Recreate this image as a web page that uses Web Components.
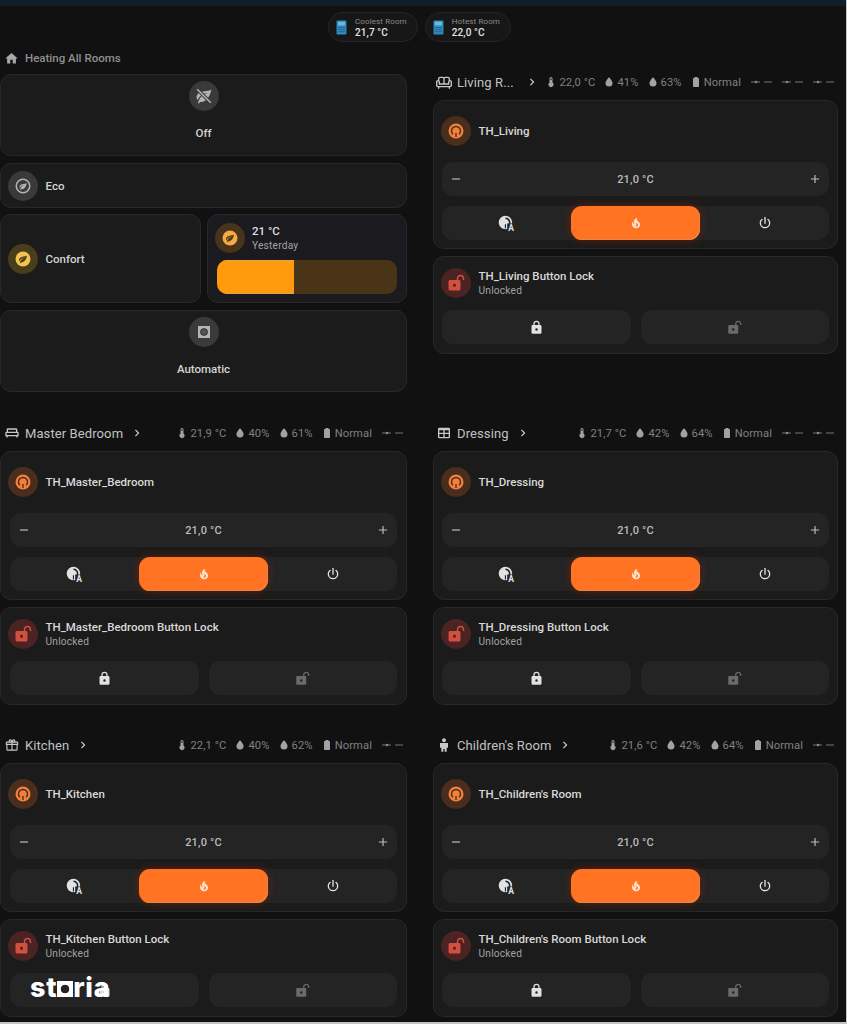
<!DOCTYPE html>
<html>
<head>
<meta charset="utf-8">
<title>Heating</title>
<style>
    html { background: #c4c4c4; }
    body {
        margin: 0;
        width: 846px;
        height: 1022px;
        overflow: hidden;
        position: relative;
        background: #111111;
        color: #e1e1e1;
        font-family: Roboto, "Liberation Sans", sans-serif;
    }
</style>
</head>
<body>
<top-bar></top-bar>
<chip-row>
    <top-chip label="Coolest Room" value="21,7 °C"></top-chip>
    <top-chip label="Hotest Room" value="22,0 °C"></top-chip>
</chip-row>

<room-grid>
    <heat-section>
        <mode-tile layout="column" icon="leafOff" label="Off" tone="gray"></mode-tile>
        <mode-tile layout="row" icon="leafRing" label="Eco" tone="gray"></mode-tile>
        <split-row>
            <mode-tile layout="row" icon="leafDisc" label="Confort" tone="yellow" tall></mode-tile>
            <slider-tile value="21 °C" sub="Yesterday"></slider-tile>
        </split-row>
        <mode-tile layout="column" icon="auto" label="Automatic" tone="gray"></mode-tile>
    </heat-section>

    <room-section class="first" icon="sofa" name="Living R..." name-width="61" temp="22,0 °C" hum="41%" soil="63%" dashes="3">
        <thermostat-card name="TH_Living"></thermostat-card>
        <lock-card name="TH_Living Button Lock"></lock-card>
    </room-section>

    <room-section class="left" icon="bed" name="Master Bedroom" temp="21,9 °C" hum="40%" soil="61%" dashes="1">
        <thermostat-card name="TH_Master_Bedroom"></thermostat-card>
        <lock-card name="TH_Master_Bedroom Button Lock"></lock-card>
    </room-section>

    <room-section icon="table" name="Dressing" temp="21,7 °C" hum="42%" soil="64%" dashes="2">
        <thermostat-card name="TH_Dressing"></thermostat-card>
        <lock-card name="TH_Dressing Button Lock"></lock-card>
    </room-section>

    <room-section class="left" icon="gift" name="Kitchen" temp="22,1 °C" hum="40%" soil="62%" dashes="1">
        <thermostat-card name="TH_Kitchen"></thermostat-card>
        <lock-card name="TH_Kitchen Button Lock"></lock-card>
    </room-section>

    <room-section icon="child" name="Children's Room" temp="21,6 °C" hum="42%" soil="64%" dashes="1">
        <thermostat-card name="TH_Children's Room"></thermostat-card>
        <lock-card name="TH_Children's Room Button Lock"></lock-card>
    </room-section>
</room-grid>

<storia-mark></storia-mark>

<script>
const p = (d) => `<path fill="currentColor" d="${d}"/>`;

const LEAF = "M17,8C8,10 5.9,16.17 3.82,21.34L5.71,22L6.66,19.7C7.14,19.87 7.64,20 8,20C19,20 22,3 22,3C21,5 14,5.25 9,6.25C4,7.25 2,11.5 2,13.5C2,15.5 3.75,17.25 3.75,17.25C7,8 17,8 17,8Z";
const LOCK = "M12,17A2,2 0 0,0 14,15C14,13.89 13.1,13 12,13A2,2 0 0,0 10,15A2,2 0 0,0 12,17M18,8A2,2 0 0,1 20,10V20A2,2 0 0,1 18,22H6A2,2 0 0,1 4,20V10C4,8.89 4.9,8 6,8H7V6A5,5 0 0,1 12,1A5,5 0 0,1 17,6V8H18M12,3A3,3 0 0,0 9,6V8H15V6A3,3 0 0,0 12,3Z";
const LOCK_OPEN = "M18,1C15.24,1 13,3.24 13,6V8H4C2.9,8 2,8.89 2,10V20C2,21.11 2.9,22 4,22H16C17.11,22 18,21.11 18,20V10C18,8.89 17.11,8 16,8H15V6C15,4.34 16.34,3 18,3C19.66,3 21,4.34 21,6V8H23V6C23,3.24 20.76,1 18,1M10,13C11.1,13 12,13.89 12,15C12,16.11 11.1,17 10,17C8.9,17 8,16.11 8,15C8,13.89 8.9,13 10,13Z";
const GIFT = "M22,12V20A2,2 0 0,1 20,22H4A2,2 0 0,1 2,20V12A1,1 0 0,1 1,11V8A2,2 0 0,1 3,6H6.17C6.06,5.69 6,5.35 6,5A3,3 0 0,1 9,2C10,2 10.88,2.5 11.43,3.24V3.23L12,4L12.57,3.23V3.24C13.12,2.5 14,2 15,2A3,3 0 0,1 18,5C18,5.35 17.94,5.69 17.83,6H21A2,2 0 0,1 23,8V11A1,1 0 0,1 22,12M4,20H11V12H4V20M20,20V12H13V20H20M9,4A1,1 0 0,0 8,5A1,1 0 0,0 9,6A1,1 0 0,0 10,5A1,1 0 0,0 9,4M15,4A1,1 0 0,0 14,5A1,1 0 0,0 15,6A1,1 0 0,0 16,5A1,1 0 0,0 15,4M3,8V10H11V8H3M13,8V10H21V8H13Z";

const ICONS = {
    home: p("M10,20V14H14V20H19V12H22L12,3L2,12H5V20H10Z"),
    sofa: p("M21 9V7C21 5.35 19.65 4 18 4H14C13.23 4 12.53 4.3 12 4.78C11.47 4.3 10.77 4 10 4H6C4.35 4 3 5.35 3 7V9C1.35 9 0 10.35 0 12V17C0 18.65 1.35 20 3 20V22H5V20H19V22H21V20C22.65 20 24 18.65 24 17V12C24 10.35 22.65 9 21 9M14 6H18C18.55 6 19 6.45 19 7V9.78C18.39 10.33 18 11.12 18 12V14H13V7C13 6.45 13.45 6 14 6M5 7C5 6.45 5.45 6 6 6H10C10.55 6 11 6.45 11 7V14H6V12C6 11.12 5.61 10.33 5 9.78V7M22 17C22 17.55 21.55 18 21 18H3C2.45 18 2 17.55 2 17V12C2 11.45 2.45 11 3 11S4 11.45 4 12V16H20V12C20 11.45 20.45 11 21 11S22 11.45 22 12V17Z"),
    bed: p("M20,10V7A2,2 0 0,0 18,5H6A2,2 0 0,0 4,7V10A2,2 0 0,0 2,12V17H3.3L4,19H5L5.7,17H18.3L19,19H20L20.7,17H22V12A2,2 0 0,0 20,10M6,7H18V10H6V7M20,15H4V12H20V15Z"),
    table: p("M5,4H19A2,2 0 0,1 21,6V18A2,2 0 0,1 19,20H5A2,2 0 0,1 3,18V6A2,2 0 0,1 5,4M5,8V11.5H11V8H5M13,8V11.5H19V8H13M5,13.5V18H11V13.5H5M13,13.5V18H19V13.5H13Z"),
    gift: `<g transform="translate(1.8 1.8) scale(.85)">${p(GIFT)}</g>`,
    child: p("M12,2A3,3 0 0,1 15,5A3,3 0 0,1 12,8A3,3 0 0,1 9,5A3,3 0 0,1 12,2M11,22H8V16H6V9H18V16H16V22H13V18H11V22Z"),
    chevron: p("M8.59,16.58L13.17,12L8.59,7.41L10,6L16,12L10,18L8.59,16.58Z"),
    thermometer: p("M15 13V5A3 3 0 0 0 9 5V13A5 5 0 1 0 15 13M12 4A1 1 0 0 1 13 5V8H11V5A1 1 0 0 1 12 4Z"),
    drop: p("M12,21A7,7 0 0,1 5,14C5,9.5 12,2.5 12,2.5C12,2.5 19,9.5 19,14A7,7 0 0,1 12,21Z"),
    battery: p("M16.67,4H15V2H9V4H7.33A1.33,1.33 0 0,0 6,5.33V20.67C6,21.4 6.6,22 7.33,22H16.67A1.33,1.33 0 0,0 18,20.67V5.33C18,4.6 17.4,4 16.67,4Z"),
    minus: p("M19,13H5V11H19V13Z"),
    plus: p("M19,13H13V19H11V13H5V11H11V5H13V11H19V13Z"),
    fire: p("M17.66 11.2C17.43 10.9 17.15 10.64 16.89 10.38C16.22 9.78 15.46 9.35 14.82 8.72C13.33 7.26 13 4.85 13.95 3C13 3.23 12.17 3.75 11.46 4.32C8.87 6.4 7.85 10.07 9.07 13.22C9.11 13.32 9.15 13.42 9.15 13.55C9.15 13.77 9 13.97 8.8 14.05C8.57 14.15 8.33 14.09 8.14 13.93C8.08 13.88 8.04 13.83 8 13.76C6.87 12.33 6.69 10.28 7.45 8.64C5.78 10 4.87 12.3 5 14.47C5.06 14.97 5.12 15.47 5.29 15.97C5.43 16.57 5.7 17.17 6 17.7C7.08 19.43 8.95 20.67 10.96 20.92C13.1 21.19 15.39 20.8 17.03 19.32C18.86 17.66 19.5 15 18.56 12.72L18.43 12.46C18.22 12 17.66 11.2 17.66 11.2M14.5 17.5C14.22 17.74 13.76 18 13.4 18.1C12.28 18.5 11.16 17.94 10.5 17.28C11.69 17 12.4 16.12 12.61 15.23C12.78 14.43 12.46 13.77 12.33 13C12.21 12.26 12.23 11.63 12.5 10.94C12.69 11.32 12.89 11.7 13.13 12C13.9 13 15.11 13.44 15.37 14.8C15.41 14.94 15.43 15.08 15.43 15.23C15.46 16.05 15.1 16.95 14.5 17.5H14.5Z"),
    power: p("M16.56,5.44L15.11,6.89C16.84,7.94 18,9.83 18,12A6,6 0 0,1 12,18A6,6 0 0,1 6,12C6,9.83 7.16,7.94 8.88,6.88L7.44,5.44C5.36,6.88 4,9.28 4,12A8,8 0 0,0 12,20A8,8 0 0,0 20,12C20,9.28 18.64,6.88 16.56,5.44M13,3H11V13H13"),
    lock: p(LOCK),
    lockOpen: p(LOCK_OPEN),
    leafOff: p(LEAF) + `<path d="M3,3L21,21" stroke="#3a3a3a" stroke-width="4.4"/><path d="M3,3L21,21" stroke="currentColor" stroke-width="2"/>`,
    leafRing: `<circle cx="12" cy="12" r="9" fill="none" stroke="currentColor" stroke-width="2"/><g transform="translate(6.2 6.4) scale(.5)">${p(LEAF)}</g>`,
    leafDisc: `<circle cx="12" cy="12" r="10" fill="currentColor"/><g transform="translate(5.6 5.8) scale(.54)" style="color:#4a3a18">${p(LEAF)}</g>`,
    auto: `<rect x="4" y="4" width="16" height="16" fill="currentColor"/><circle cx="12" cy="12" r="4.4" fill="#555" stroke="#333" stroke-width="1.4"/>`,
    gauge: `<circle cx="12" cy="12" r="10" fill="currentColor"/><path d="M7.9,16.4A6,6 0 1,1 16.1,16.4" fill="none" stroke="#4a2d1c" stroke-width="1.9"/><path d="M12,14.5V20" stroke="#4a2d1c" stroke-width="1.8"/>`,
    gaugeAuto: `<circle cx="10.5" cy="10.5" r="9.5" fill="currentColor"/><path d="M10.5,4.6A6,6 0 0,1 15.8,13.4" fill="none" stroke="#242424" stroke-width="2.3"/><path d="M10.5,13V19" stroke="#242424" stroke-width="1.6"/><rect x="13" y="12" width="11" height="12" fill="#242424"/><text x="18.5" y="23" text-anchor="middle" font-family="Roboto, sans-serif" font-weight="700" font-size="12" fill="currentColor">A</text>`,
    meter: `<rect x="5" y="2" width="14" height="20" rx="2" fill="currentColor"/><rect x="7" y="4" width="10" height="5" fill="#6db6dc"/><path d="M7,12H17M7,15H17M7,18H17" stroke="#1a5f86" stroke-width="1.2"/>`
};

class MIcon extends HTMLElement {
    connectedCallback() {
        const size = this.getAttribute("size") || 16;
        this.attachShadow({ mode: "open" });
        this.shadowRoot.innerHTML = `
            <style>
                :host { display: inline-flex; width: ${size}px; height: ${size}px; flex: none; }
                svg { width: 100%; height: 100%; display: block; }
            </style>
            <svg viewBox="0 0 24 24">${ICONS[this.getAttribute("name")] || ""}</svg>
        `;
    }
}

class IconDisc extends HTMLElement {
    connectedCallback() {
        const tones = {
            gray: ["#3a3a3a", "#b4b4b4"],
            yellow: ["#4a3d1b", "#f3c34f"],
            amber: ["#48341a", "#f6a945"],
            orange: ["#4a2d1c", "#f0803c"],
            red: ["#4a2322", "#d2503f"]
        };
        const [bg, fg] = tones[this.getAttribute("tone") || "gray"];
        this.attachShadow({ mode: "open" });
        this.shadowRoot.innerHTML = `
            <style>
                :host {
                    display: flex;
                    width: 30px;
                    height: 30px;
                    flex: none;
                    border-radius: 50%;
                    align-items: center;
                    justify-content: center;
                    background: ${bg};
                    color: ${fg};
                }
            </style>
            <m-icon name="${this.getAttribute("icon")}" size="18"></m-icon>
        `;
    }
}

class TopBar extends HTMLElement {
    connectedCallback() {
        this.attachShadow({ mode: "open" });
        this.shadowRoot.innerHTML = `<style>:host { display: block; height: 6px; background: #0f1e29; }</style>`;
    }
}

class ChipRow extends HTMLElement {
    connectedCallback() {
        this.attachShadow({ mode: "open" });
        this.shadowRoot.innerHTML = `
            <style>
                :host {
                    display: flex;
                    justify-content: center;
                    gap: 7px;
                    height: 30px;
                    padding: 6px 7px 7px 0;
                }
            </style>
            <slot></slot>
        `;
    }
}

class TopChip extends HTMLElement {
    connectedCallback() {
        this.attachShadow({ mode: "open" });
        this.shadowRoot.innerHTML = `
            <style>
                :host {
                    display: flex;
                    align-items: center;
                    gap: 5px;
                    box-sizing: border-box;
                    height: 30px;
                    padding: 0 10px 0 4px;
                    border: 1px solid #262626;
                    border-radius: 15px;
                    background: #171717;
                    color: #2e8ec4;
                }
                .label { font-size: 8px; line-height: 10px; color: #8c8c8c; letter-spacing: .12px; }
                .value { font-size: 10px; line-height: 11px; font-weight: 500; color: #e4e4e4; letter-spacing: .1px; }
            </style>
            <m-icon name="meter" size="17"></m-icon>
            <div>
                <div class="label">${this.getAttribute("label")}</div>
                <div class="value">${this.getAttribute("value")}</div>
            </div>
        `;
    }
}

class RoomGrid extends HTMLElement {
    connectedCallback() {
        this.attachShadow({ mode: "open" });
        this.shadowRoot.innerHTML = `
            <style>
                :host {
                    display: grid;
                    grid-template-columns: 407px 405px;
                    column-gap: 26px;
                    row-gap: 31px;
                }
            </style>
            <slot></slot>
        `;
    }
}

class HeatSection extends HTMLElement {
    connectedCallback() {
        this.attachShadow({ mode: "open" });
        this.shadowRoot.innerHTML = `
            <style>
                :host { display: flex; flex-direction: column; margin-bottom: 1px; }
                .title {
                    display: flex;
                    align-items: center;
                    gap: 6px;
                    height: 18px;
                    padding-left: 4px;
                    margin-bottom: 7px;
                    font-size: 11.5px;
                    font-weight: 500;
                    color: #8f8f8f;
                }
                m-icon { color: #a8a8a8; }
                .stack { display: flex; flex-direction: column; gap: 7px; }
            </style>
            <div class="title"><m-icon name="home" size="15"></m-icon>Heating All Rooms</div>
            <div class="stack"><slot></slot></div>
        `;
    }
}

class SplitRow extends HTMLElement {
    connectedCallback() {
        this.attachShadow({ mode: "open" });
        this.shadowRoot.innerHTML = `
            <style>
                :host { display: grid; grid-template-columns: 1fr 1fr; gap: 6px; height: 89px; margin-top: -1px; }
            </style>
            <slot></slot>
        `;
    }
}

class ModeTile extends HTMLElement {
    connectedCallback() {
        const column = this.getAttribute("layout") === "column";
        this.attachShadow({ mode: "open" });
        this.shadowRoot.innerHTML = `
            <style>
                :host {
                    display: flex;
                    box-sizing: border-box;
                    align-items: center;
                    background: #1b1b1b;
                    border: 1px solid #282828;
                    border-radius: 11px;
                    font-size: 11.5px;
                    font-weight: 500;
                    color: #d4d4d4;
                    ${column
                        ? "flex-direction: column; height: 82px; padding-top: 6px; gap: 15px;"
                        : "height: 45px; padding-left: 7px; gap: 7.5px;"}
                }
                :host([tall]) { height: 89px; }
                span { line-height: 14px; }
            </style>
            <icon-disc icon="${this.getAttribute("icon")}" tone="${this.getAttribute("tone")}"></icon-disc>
            <span>${this.getAttribute("label")}</span>
        `;
    }
}

class SliderTile extends HTMLElement {
    connectedCallback() {
        this.attachShadow({ mode: "open" });
        this.shadowRoot.innerHTML = `
            <style>
                :host {
                    display: block;
                    box-sizing: border-box;
                    height: 89px;
                    padding: 8px 9px 0 7px;
                    background: #1b1b1f;
                    border: 1px solid #282828;
                    border-radius: 11px;
                }
                .head { display: flex; align-items: center; gap: 7.5px; margin-bottom: 7px; }
                .value { font-size: 11.5px; font-weight: 500; color: #dedede; line-height: 15px; }
                .sub { font-size: 10.2px; color: #a2a2a2; line-height: 14px; letter-spacing: .2px; }
                .track {
                    margin-left: 2px;
                    height: 34px;
                    border-radius: 10px;
                    background: #4a3417;
                    overflow: hidden;
                }
                .fill { width: 77px; height: 100%; background: #ff9a0d; box-shadow: inset 0 1px 0 #e9a24c, inset 0 -1px 0 #e9a24c; }
            </style>
            <div class="head">
                <icon-disc icon="leafDisc" tone="amber"></icon-disc>
                <div>
                    <div class="value">${this.getAttribute("value")}</div>
                    <div class="sub">${this.getAttribute("sub")}</div>
                </div>
            </div>
            <div class="track"><div class="fill"></div></div>
        `;
    }
}

class RoomSection extends HTMLElement {
    connectedCallback() {
        const nameWidth = this.getAttribute("name-width");
        const sensor = (icon, text) => `<span class="sensor"><m-icon name="${icon}" size="12"></m-icon>${text}</span>`;
        const dash = `<svg class="dash" width="21" height="6" viewBox="0 0 21 6"><path d="M0,3H9M13,3H21" stroke="#777" stroke-width="1"/><circle cx="5" cy="3" r="1.3" fill="#888"/></svg>`;
        this.attachShadow({ mode: "open" });
        this.shadowRoot.innerHTML = `
            <style>
                :host { display: flex; flex-direction: column; --bar-left: 1px; }
                :host(.first) { margin-top: 24px; }
                :host(.left) { --bar-left: 2px; }
                :host(.left) .head { padding-left: 4px; }
                .head {
                    display: flex;
                    align-items: center;
                    height: 18px;
                    padding: 0 4px 0 3px;
                    margin-bottom: 9px;
                    color: #bdbdbd;
                }
                .icon { margin-right: 5px; color: #c8c8c8; }
                .name { font-size: 13px; letter-spacing: .1px; white-space: nowrap; color: #c2c2c2; ${nameWidth ? `width: ${nameWidth}px;` : ""} }
                .chev { margin-left: 7px; color: #d0d0d0; }
                .sensors {
                    margin-left: auto;
                    display: flex;
                    align-items: center;
                    gap: 8px;
                    font-size: 11.2px;
                    color: #808080;
                    white-space: nowrap;
                }
                .sensor { display: inline-flex; align-items: center; letter-spacing: .1px; }
                .sensor m-icon { color: #a2a2a2; margin-right: 2px; }
                .dash { margin-left: 2px; }
                .stack { display: flex; flex-direction: column; gap: 7px; }
            </style>
            <div class="head">
                <m-icon class="icon" name="${this.getAttribute("icon")}" size="16"></m-icon>
                <span class="name">${this.getAttribute("name")}</span>
                <m-icon class="chev" name="chevron" size="14"></m-icon>
                <div class="sensors">
                    ${sensor("thermometer", this.getAttribute("temp"))}
                    ${sensor("drop", this.getAttribute("hum"))}
                    ${sensor("drop", this.getAttribute("soil"))}
                    ${sensor("battery", "Normal")}
                    ${dash.repeat(Number(this.getAttribute("dashes")))}
                </div>
            </div>
            <div class="stack"><slot></slot></div>
        `;
    }
}

class ThermostatCard extends HTMLElement {
    connectedCallback() {
        this.attachShadow({ mode: "open" });
        this.shadowRoot.innerHTML = `
            <style>
                :host {
                    display: block;
                    box-sizing: border-box;
                    height: 149px;
                    padding: 15px 0 0 7px;
                    background: #1b1b1b;
                    border: 1px solid #282828;
                    border-radius: 11px;
                }
                .head { display: flex; align-items: center; gap: 7.5px; margin-bottom: 16px; font-size: 11.5px; font-weight: 500; color: #d8d8d8; }
                .set, .modes { width: 387px; margin-left: var(--bar-left); height: 34px; border-radius: 11px; background: #242424; }
                .set {
                    display: flex;
                    align-items: center;
                    justify-content: space-between;
                    padding: 0 7px;
                    margin-bottom: 10px;
                    font-size: 11px;
                    font-weight: 500;
                    color: #bdbdbd;
                    letter-spacing: .2px;
                    box-sizing: border-box;
                }
                .modes {
                    display: grid;
                    grid-template-columns: 1fr 1fr 1fr;
                    color: #e2e2e2;
                }
                .modes > div { display: flex; align-items: center; justify-content: center; }
                .modes .on {
                    background: #ff7323;
                    border-radius: 11px;
                    color: #fbe3d0;
                    box-shadow: 0 0 8px rgba(130, 35, 0, .75), inset -1px -1px 0 #e5884f;
                }
            </style>
            <div class="head"><icon-disc icon="gauge" tone="orange"></icon-disc>${this.getAttribute("name")}</div>
            <div class="set">
                <m-icon name="minus" size="14"></m-icon>
                <span>21,0 °C</span>
                <m-icon name="plus" size="14"></m-icon>
            </div>
            <div class="modes">
                <div><m-icon name="gaugeAuto" size="17"></m-icon></div>
                <div class="on"><m-icon name="fire" size="14"></m-icon></div>
                <div><m-icon name="power" size="16"></m-icon></div>
            </div>
        `;
    }
}

class LockCard extends HTMLElement {
    connectedCallback() {
        this.attachShadow({ mode: "open" });
        this.shadowRoot.innerHTML = `
            <style>
                :host {
                    display: block;
                    box-sizing: border-box;
                    height: 98px;
                    padding: 11px 0 0 7px;
                    background: #1b1b1b;
                    border: 1px solid #282828;
                    border-radius: 11px;
                }
                .head { display: flex; align-items: center; gap: 7.5px; margin-bottom: 12px; }
                .name { font-size: 11.5px; font-weight: 500; line-height: 15px; color: #d8d8d8; margin-top: 1px; }
                .sub { font-size: 10.2px; line-height: 14px; color: #a2a2a2; letter-spacing: .2px; }
                .btns { display: grid; grid-template-columns: 1fr 1fr; gap: 10px; width: 387px; margin-left: var(--bar-left); }
                .btns > div {
                    display: flex;
                    align-items: center;
                    justify-content: center;
                    height: 34px;
                    border-radius: 11px;
                    background: #242424;
                    color: #e2e2e2;
                }
                .btns > div + div { color: #6a6a6a; }
            </style>
            <div class="head">
                <icon-disc icon="lockOpen" tone="red"></icon-disc>
                <div>
                    <div class="name">${this.getAttribute("name")}</div>
                    <div class="sub">Unlocked</div>
                </div>
            </div>
            <div class="btns">
                <div><m-icon name="lock" size="15"></m-icon></div>
                <div><m-icon name="lockOpen" size="15"></m-icon></div>
            </div>
        `;
    }
}

// watermark sitting over the kitchen lock button
class StoriaMark extends HTMLElement {
    connectedCallback() {
        this.attachShadow({ mode: "open" });
        this.shadowRoot.innerHTML = `
            <style>
                :host {
                    position: absolute;
                    left: 30px;
                    top: 971px;
                    font-family: Inter, "Liberation Sans", sans-serif;
                    font-size: 27px;
                    font-weight: 800;
                    line-height: 34px;
                    color: #ffffff;
                    letter-spacing: .7px;
                }
                .o {
                    display: inline-block;
                    color: transparent;
                    background: radial-gradient(circle at 50% 50%, #242424 0 4px, #ffffff 4.6px);
                    font-size: 14px;
                    line-height: 16px;
                    height: 16px;
                    width: 16px;
                    text-align: center;
                    letter-spacing: 0;
                    vertical-align: 3px;
                }
            </style>
            st<span class="o">o</span>ria
        `;
    }
}

customElements.define("m-icon", MIcon);
customElements.define("icon-disc", IconDisc);
customElements.define("top-bar", TopBar);
customElements.define("chip-row", ChipRow);
customElements.define("top-chip", TopChip);
customElements.define("room-grid", RoomGrid);
customElements.define("heat-section", HeatSection);
customElements.define("split-row", SplitRow);
customElements.define("mode-tile", ModeTile);
customElements.define("slider-tile", SliderTile);
customElements.define("room-section", RoomSection);
customElements.define("thermostat-card", ThermostatCard);
customElements.define("lock-card", LockCard);
customElements.define("storia-mark", StoriaMark);
</script>
</body>
</html>
